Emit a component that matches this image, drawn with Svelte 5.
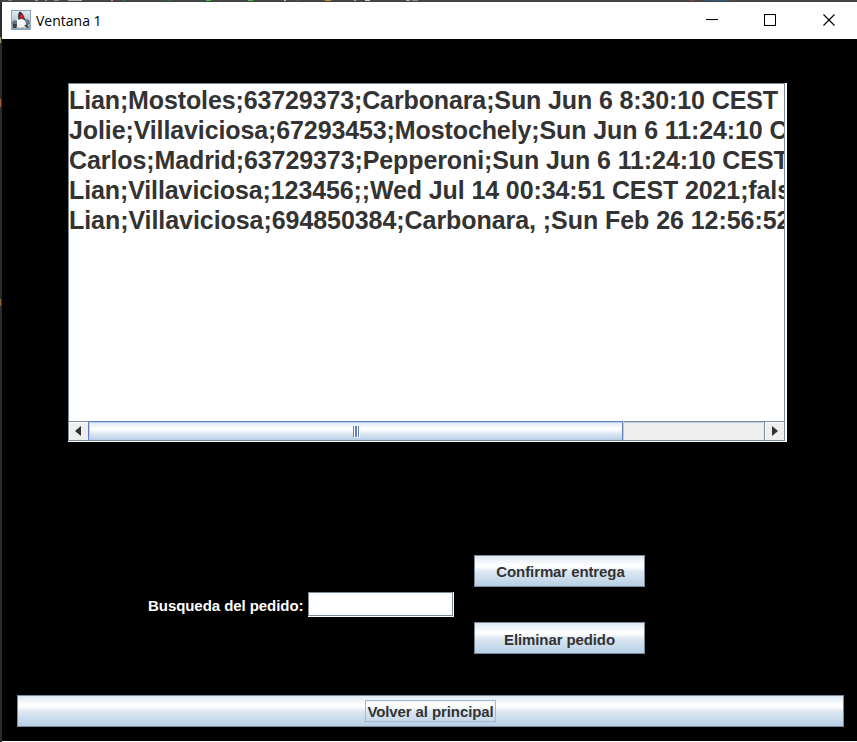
<script>
  const orders = [
    { text: 'Lian;Mostoles;63729373;Carbonara;Sun Jun 6 8:30:10 CEST 2021;false', spacing: -0.12 },
    { text: 'Jolie;Villaviciosa;67293453;Mostochely;Sun Jun 6 11:24:10 CEST 2021;false', spacing: -0.11 },
    { text: 'Carlos;Madrid;63729373;Pepperoni;Sun Jun 6 11:24:10 CEST 2021;false', spacing: -0.1 },
    { text: 'Lian;Villaviciosa;123456;;Wed Jul 14 00:34:51 CEST 2021;false', spacing: -0.11 },
    { text: 'Lian;Villaviciosa;694850384;Carbonara, ;Sun Feb 26 12:56:52 CET 2021;false', spacing: -0.06 }
  ];
  const specks = [
    [8, 4, '#777'], [35, 3, '#999'], [45, 2, '#999'], [54, 5, '#888'], [68, 14, '#aaa'],
    [111, 2, '#c0a090'], [124, 1, '#3a9080'], [167, 4, '#187c28'], [206, 5, '#49b83f'],
    [248, 5, '#49b83f'], [284, 2, '#bbb'], [297, 3, '#5b45a0'], [325, 6, '#c98736'],
    [354, 2, '#aaa'], [365, 5, '#ccc'], [406, 4, '#aaa'], [412, 6, '#888'],
    [690, 5, '#7b4937'], [706, 24, '#315875']
  ];
</script>

<div class="desktop">
  <svg class="backdrop" width="857" height="742" aria-hidden="true">
    <rect x="0" y="0" width="857" height="2" fill="#444545" />
    {#each specks as [x, w, c]}
      <rect {x} y="0" width={w} height="1" fill={c} />
    {/each}
    <rect x="0" y="37" width="1" height="6" fill="#99935f" />
    <rect x="0" y="99" width="1" height="8" fill="#a65b2e" />
    <rect x="0" y="299" width="1" height="7" fill="#8d6238" />
  </svg>
  <main class="window">
    <header>
      <svg class="logo" width="20" height="20" viewBox="0 0 20 20" aria-hidden="true">
        <defs>
          <linearGradient id="tile" x2="0" y2="1"><stop stop-color="#e4edf4" /><stop offset="1" stop-color="#8fa5b8" /></linearGradient>
        </defs>
        <rect x=".5" y=".5" width="19" height="19" fill="url(#tile)" stroke="#8ca4b7" />
        <path d="M1 12 4 10 7 12 6 17 2 18zM14 9l4 1 1 4-4 1z" fill="#6b7178" />
        <path d="M2 14h4l-1 4H2z" fill="#3b3f43" />
        <path d="M6 9 9 7l5 3 2 8-4-1-3 1-3-1z" fill="#f5f5f5" />
        <path d="M8.6 1.5c2.600.6 4.600 3.800 5.800 9.300l-3.400-2-3.700.9c-.4-3.600-.3-6.600 1.300-8.200z" fill="#33363a" />
        <path d="M13 15.500l3 2.500h2l-2-4z" fill="#43474b" />
        <circle cx="10.700" cy="6.700" r="2.100" fill="#d9222a" />
      </svg>
      <h1>Ventana 1</h1>
      <svg class="controls" width="130" height="14" viewBox="0 0 130 14" fill="none" stroke="#000" aria-label="Controles">
        <path d="M0 6.500h12M58.500 1.500h11v11h-11z" shape-rendering="crispEdges" />
        <path d="m117.500 1.500 11 11m0-11-11 11" stroke-width="1.100" />
      </svg>
    </header>

    <section class="orders">
      <div class="list">
        {#each orders as order}
          <div class="row" style:letter-spacing={`${order.spacing}px`}>{order.text}</div>
        {/each}
      </div>
      <div class="scroll">
        <div class="arrow left"><svg width="6" height="12" viewBox="0 0 6 12"><path d="M6 1v10L.5 6.500v-1z" fill="#333" /></svg></div>
        <div class="track">
          <div class="thumb"><i></i><i></i><i></i></div>
        </div>
        <div class="arrow right"><svg width="6" height="12" viewBox="0 0 6 12"><path d="M0 1v10l5.500-4.500v-1z" fill="#333" /></svg></div>
      </div>
    </section>

    <section class="form">
      <label for="busqueda">Busqueda del pedido:</label>
      <input id="busqueda" type="text" />
      <div class="actions">
        <button class="confirm">Confirmar entrega</button>
        <button class="remove">Eliminar pedido</button>
      </div>
    </section>

    <button class="back"><span>Volver al principal</span></button>
  </main>
</div>

<style>
  .desktop {
    position: relative;
    box-sizing: border-box;
    width: 857px;
    height: 742px;
    padding: 2px 0 0 2px;
    overflow: hidden;
    background: #2b2c2d;
    font-family: "Liberation Sans", Arial, sans-serif;
  }
  .backdrop { position: absolute; left: 0; top: 0; }
  .window {
    position: relative;
    box-sizing: border-box;
    height: 740px;
    background: #000;
    border-bottom: 1px solid #fff;
    display: flex;
    flex-direction: column;
  }
  header {
    height: 37px;
    flex: none;
    box-sizing: border-box;
    display: flex;
    align-items: center;
    padding: 0 21px 0 9px;
    background: #fff;
  }
  .logo { margin-bottom: 1px; }
  h1 {
    margin: 0 auto 0 5px;
    font: 400 14px/20px "Open Sans", sans-serif;
    color: #000;
  }
  .controls { margin-bottom: 1px; }
  .orders {
    box-sizing: border-box;
    width: 717px;
    height: 358px;
    flex: none;
    margin: 44px 0 0 66px;
    background: #fff;
    border: 1px solid #7a8a99;
    box-shadow: 2px 0 0 #fff, 0 1px 0 #fff, 2px 1px 0 #fff;
    display: flex;
    flex-direction: column;
    overflow: hidden;
  }
  .list { flex: 1; overflow: hidden; padding-top: 1px; }
  .row {
    height: 30px;
    font-size: 25px;
    line-height: 30px;
    font-weight: 700;
    color: #333;
    white-space: pre;
  }
  .scroll {
    height: 19px;
    box-sizing: border-box;
    border-top: 1px solid #7a8a99;
    display: flex;
    background: #eee;
  }
  .arrow {
    width: 19px;
    box-sizing: border-box;
    display: flex;
    align-items: center;
    justify-content: center;
    border-top: 1px solid #fff;
    border-left: 1px solid #fff;
    padding-bottom: 2px;
  }
  .arrow.left { padding-right: 2px; }
  .right { box-sizing: content-box; width: 18px; }
  .track {
    flex: 1;
    border-right: 1px solid #7a8a99;
    box-shadow: inset 0 1px #b8cfe5;
  }
  .thumb {
    box-sizing: border-box;
    width: 535px;
    height: 19px;
    margin-top: -1px;
    border: 1px solid #6382bf;
    border-bottom: 0;
    box-shadow: inset 1px 1px #b8cfe5, 1px 0 #b8cfe5;
    background: linear-gradient(#dde8f3 0, #fff 35%, #fff 42%, #dde8f3 65%, #b8cfe5 100%);
    display: flex;
    align-items: center;
    justify-content: center;
    gap: 1px;
  }
  .thumb i { width: 1px; height: 11px; background: #6382bf; box-shadow: 1px 1px #fff; }
  .thumb i:nth-child(2) { width: 2px; }
  .form {
    height: 99px;
    margin: 114px 0 0 146px;
    display: flex;
    align-items: center;
  }
  label {
    width: 160px;
    color: #fff;
    font-size: 15px;
    font-weight: 700;
    line-height: 18px;
    letter-spacing: -0.06px;
    white-space: nowrap;
    padding-top: 2px;
  }
  input {
    box-sizing: border-box;
    width: 145px;
    height: 24px;
    padding: 0 2px;
    border: 1px solid #7a8a99;
    border-radius: 0;
    background: #fff;
    box-shadow: 1px 0 #fff, 0 1px #fff, 1px 1px #fff;
    outline: 0;
    margin: 0 0 2px;
  }
  .actions {
    margin-left: 21px;
    display: flex;
    flex-direction: column;
    gap: 35px;
  }
  button {
    box-sizing: border-box;
    width: 171px;
    height: 32px;
    margin: 0;
    padding: 1px 0 0;
    border: 1px solid #7a8a99;
    border-radius: 0;
    background: linear-gradient(#dde8f3 0, #fff 30%, #fff 35%, #dde8f3 52%, #b8cfe5 100%);
    color: #333;
    font: 700 15px/18px "Liberation Sans", Arial, sans-serif;
    letter-spacing: -0.1px;
    white-space: nowrap;
  }
  .confirm { padding-left: 2px; }
  .remove { padding-top: 3px; }
  .back {
    width: 827px;
    margin: 41px 0 0 15px;
    padding: 0;
    display: flex;
    align-items: center;
    justify-content: center;
  }
  .back span {
    box-sizing: border-box;
    height: 22px;
    padding: 1px;
    border: 1px solid #a3b8cc;
    line-height: 20px;
  }
</style>
